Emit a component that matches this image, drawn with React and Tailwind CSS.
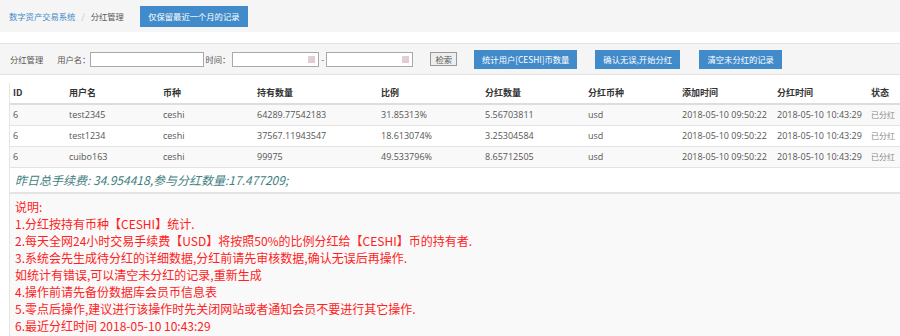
const CJK = '"Noto Sans CJK SC", "Open Sans", sans-serif'

const cols = 'grid grid-cols-[56px_94px_94px_124px_104px_103px_94px_95px_94px_1fr]'

const rows = [
  ['6', 'test2345', 'ceshi', '64289.77542183', '31.85313%', '5.56703811', 'usd', '2018-05-10 09:50:22', '2018-05-10 10:43:29', '已分红'],
  ['6', 'test1234', 'ceshi', '37567.11943547', '18.613074%', '3.25304584', 'usd', '2018-05-10 09:50:22', '2018-05-10 10:43:29', '已分红'],
  ['6', 'cuibo163', 'ceshi', '99975', '49.533796%', '8.65712505', 'usd', '2018-05-10 09:50:22', '2018-05-10 10:43:29', '已分红'],
]

const heads = ['ID', '用户名', '币种', '持有数量', '比例', '分红数量', '分红币种', '添加时间', '分红时间', '状态']

const notes = [
  '说明:',
  '1.分红按持有币种【CESHI】统计.',
  '2.每天全网24小时交易手续费【USD】将按照50%的比例分红给【CESHI】币的持有者.',
  '3.系统会先生成待分红的详细数据,分红前请先审核数据,确认无误后再操作.',
  '如统计有错误,可以清空未分红的记录,重新生成',
  '4.操作前请先备份数据库会员币信息表',
  '5.零点后操作,建议进行该操作时先关闭网站或者通知会员不要进行其它操作.',
  '6.最近分红时间 2018-05-10 10:43:29',
]

function BlueButton({ children, className = '' }) {
  return (
    <div className={`bg-[#428bca] text-white text-[8.3px] flex items-center justify-center ${className}`}>
      {children}
    </div>
  )
}

function DateInput() {
  return (
    <div className="w-[87px] h-[15px] border border-[#a9a9a9] bg-white flex items-center justify-end pr-[3px]">
      <div className="w-[7px] h-[7px] bg-gradient-to-br from-[#b8c8e0] to-[#e8a8a8] opacity-70" />
    </div>
  )
}

export default function App() {
  return (
    <div className="w-[900px] h-[336px] overflow-hidden bg-white text-[#555]" style={{ fontFamily: CJK }}>
      <div className="h-[32px] bg-[#f5f5f5] flex items-center pl-[9px] text-[8.3px]">
        <span className="text-[#428bca]">数字资产交易系统</span>
        <span className="text-[#bbb] mx-[6px]">/</span>
        <span className="text-[#555]">分红管理</span>
        <BlueButton className="ml-[16px] w-[108px] h-[21px]">仅保留最近一个月的记录</BlueButton>
      </div>

      <div className="mt-[11px] h-[32px] bg-[#f5f5f5] border-y border-[#e3e3e3] flex items-center text-[8.3px] text-[#555]">
        <span className="ml-[10px]">分红管理</span>
        <span className="ml-[14px]">用户名：</span>
        <div className="w-[114px] h-[15px] border border-[#a9a9a9] bg-white" />
        <span className="ml-[1px] mr-[2px]">时间：</span>
        <DateInput />
        <span className="mx-[2px]">-</span>
        <DateInput />
        <div className="ml-[17px] w-[27px] h-[14px] border border-[#999] bg-[#eee] flex items-center justify-center">检索</div>
        <BlueButton className="ml-[17px] w-[103px] h-[19px]">统计用户[CESHI]币数量</BlueButton>
        <BlueButton className="ml-[18px] w-[85px] h-[19px]">确认无误,开始分红</BlueButton>
        <BlueButton className="ml-[19px] w-[83px] h-[19px]">清空未分红的记录</BlueButton>
      </div>

      <div className="mt-[8px] ml-[9px] border-l border-[#e5e5e5]">
        <div className={`${cols} h-[22px] items-center border-b-2 border-[#ddd] text-[9px] font-bold text-[#333]`}>
          {heads.map((h) => (
            <div key={h} className="pl-[3px] whitespace-nowrap">{h}</div>
          ))}
        </div>
        {rows.map((r, i) => (
          <div
            key={i}
            className={`${cols} h-[21px] items-center border-b border-[#e3e3e3] text-[9px] ${i % 2 === 0 ? 'bg-[#f9f9f9]' : 'bg-white'}`}
            style={{ fontFamily: '"Open Sans", "Noto Sans CJK SC", sans-serif' }}
          >
            {r.map((c, j) => (
              <div key={j} className={`pl-[3px] whitespace-nowrap ${j === 9 ? 'text-[#888] text-[8px]' : ''}`}>{c}</div>
            ))}
          </div>
        ))}

        <div className="h-[26px] flex items-center pl-[5px] italic text-[12px] text-[#3f7f7f] border-b-2 border-[#e3e3e3]">
          昨日总手续费: 34.954418,参与分红数量:17.477209;
        </div>

        <div className="bg-[#f9f9f9] pt-[4px] pl-[5px] h-[160px] text-[12px] leading-[17px] text-[#f22]">
          {notes.map((n) => (
            <div key={n} className="whitespace-nowrap">{n}</div>
          ))}
        </div>
      </div>
    </div>
  )
}
